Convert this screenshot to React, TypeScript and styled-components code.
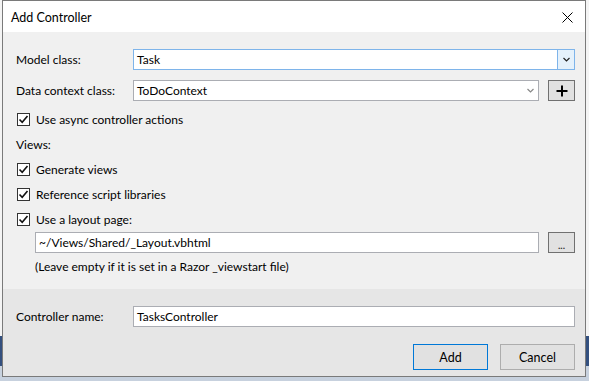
import React, {FC} from 'react';
import styled, {createGlobalStyle} from 'styled-components';

const GlobalStyle = createGlobalStyle`
  html, body {
    margin: 0;
    padding: 0;
    height: 381px;
    overflow: hidden;
    background: linear-gradient(to bottom, #f4f4f4 0, #f4f4f4 336px, #34507f 336px, #34507f 366px, #c7d1de 366px);
  }
  body {
    font-family: Lato, "Noto Sans", sans-serif;
    font-size: 12px;
    color: #000;
  }
`;

const Window = styled.div`
  margin-left: 2px;
  width: 584px;
  height: 377px;
  box-sizing: border-box;
  border: 1px solid #7a7a7a;
  background: #f0f0f0;
  display: flex;
  flex-direction: column;
`;

const TitleBar = styled.div`
  height: 31px;
  background: #fff;
  display: flex;
  align-items: center;
  justify-content: space-between;
  padding: 1px 6px 0 8px;
  box-sizing: border-box;
  font-size: 12.5px;
`;

const CloseButton = styled.div`
  width: 24px;
  height: 24px;
  display: flex;
  align-items: center;
  justify-content: center;
`;

const Body = styled.div`
  flex: 1;
  padding: 17px 10px 0 13px;
  display: flex;
  flex-direction: column;
`;

const FieldRow = styled.div<{gap?: number}>`
  display: grid;
  grid-template-columns: 117px 1fr auto;
  align-items: center;
  height: 21px;
  margin-bottom: ${p => p.gap ?? 0}px;
`;

const Label = styled.span`
  white-space: nowrap;
`;

const Field = styled.div<{focused?: boolean}>`
  height: 21px;
  box-sizing: border-box;
  border: 1px solid ${p => (p.focused ? '#7eb4ea' : '#abadb3')};
  background: #fff;
  display: flex;
  align-items: center;
  padding-left: 3px;
`;

const FieldText = styled.span`
  flex: 1;
`;

const DropButton = styled.div<{active?: boolean}>`
  width: 17px;
  height: 100%;
  display: flex;
  align-items: center;
  justify-content: center;
  background: ${p => (p.active ? '#e5f1fb' : 'transparent')};
  border-left: 1px solid ${p => (p.active ? '#7eb4ea' : 'transparent')};
  box-sizing: border-box;
`;

const SmallButton = styled.div`
  width: 27px;
  height: 21px;
  box-sizing: border-box;
  margin-left: 9px;
  border: 1px solid #707070;
  background: #e1e1e1;
  display: flex;
  align-items: center;
  justify-content: center;
`;

const Ellipsis = styled.span`
  font-size: 10px;
  line-height: 1;
  margin-top: 5px;
  font-weight: bold;
  color: #333;
`;

const CheckRow = styled.label`
  height: 25px;
  display: flex;
  align-items: center;
  gap: 6px;
  padding-left: 1px;
`;

const Box = styled.span`
  width: 13px;
  height: 13px;
  box-sizing: border-box;
  border: 1px solid #333;
  background: #fff;
  display: flex;
  align-items: center;
  justify-content: center;
`;

const Section = styled.div`
  height: 25px;
  display: flex;
  align-items: center;
`;

const LayoutRow = styled.div`
  display: flex;
  align-items: center;
  padding-left: 19px;
  height: 21px;
`;

const Hint = styled.div`
  padding-left: 19px;
  height: 26px;
  display: flex;
  align-items: center;
`;

const Footer = styled.div`
  height: 87px;
  background: #e6e6e6;
  padding: 17px 10px 0 13px;
  box-sizing: border-box;
  display: flex;
  flex-direction: column;
`;

const Buttons = styled.div`
  display: flex;
  justify-content: flex-end;
  gap: 12px;
  margin-top: 17px;
`;

const Button = styled.div<{primary?: boolean}>`
  width: 75px;
  height: 26px;
  box-sizing: border-box;
  border: 1px solid ${p => (p.primary ? '#0078d7' : '#adadad')};
  background: #e1e1e1;
  display: flex;
  align-items: center;
  justify-content: center;
  font-size: 12.5px;
`;

const Chevron: FC<{color: string}> = ({color}) => (
  <svg width="7" height="5" viewBox="0 0 7 5">
    <path d="M0.5 1 L3.5 4 L6.5 1" fill="none" stroke={color} strokeWidth="1.2" />
  </svg>
);

const Check: FC = () => (
  <svg width="11" height="11" viewBox="0 0 11 11">
    <path d="M1.5 5.5 L4.2 8.3 L9.5 2" fill="none" stroke="#111" strokeWidth="1.6" />
  </svg>
);

const CheckItem: FC<{text: string}> = ({text}) => (
  <CheckRow>
    <Box><Check /></Box>
    <span>{text}</span>
  </CheckRow>
);

const App: FC = () => {
  return (
    <>
      <GlobalStyle />
      <Window>
        <TitleBar>
          <span>Add Controller</span>
          <CloseButton>
            <svg width="11" height="11" viewBox="0 0 11 11">
              <path d="M0.5 0.5 L10.5 10.5 M10.5 0.5 L0.5 10.5" stroke="#000" strokeWidth="1" />
            </svg>
          </CloseButton>
        </TitleBar>
        <Body>
          <FieldRow gap={10}>
            <Label>Model class:</Label>
            <Field focused>
              <FieldText>Task</FieldText>
              <DropButton active><Chevron color="#222" /></DropButton>
            </Field>
            <span />
          </FieldRow>
          <FieldRow gap={6}>
            <Label>Data context class:</Label>
            <Field>
              <FieldText>ToDoContext</FieldText>
              <DropButton><Chevron color="#888" /></DropButton>
            </Field>
            <SmallButton>
              <svg width="12" height="12" viewBox="0 0 12 12">
                <path d="M6 0.5 V11.5 M0.5 6 H11.5" stroke="#000" strokeWidth="2" />
              </svg>
            </SmallButton>
          </FieldRow>
          <CheckItem text="Use async controller actions" />
          <Section>Views:</Section>
          <CheckItem text="Generate views" />
          <CheckItem text="Reference script libraries" />
          <CheckItem text="Use a layout page:" />
          <LayoutRow>
            <Field style={{flex: 1}}>
              <FieldText>~/Views/Shared/_Layout.vbhtml</FieldText>
            </Field>
            <SmallButton><Ellipsis>...</Ellipsis></SmallButton>
          </LayoutRow>
          <Hint>(Leave empty if it is set in a Razor _viewstart file)</Hint>
        </Body>
        <Footer>
          <FieldRow>
            <Label>Controller name:</Label>
            <Field>
              <FieldText>TasksController</FieldText>
            </Field>
            <span />
          </FieldRow>
          <Buttons>
            <Button primary>Add</Button>
            <Button>Cancel</Button>
          </Buttons>
        </Footer>
      </Window>
    </>
  );
};

export default App;
